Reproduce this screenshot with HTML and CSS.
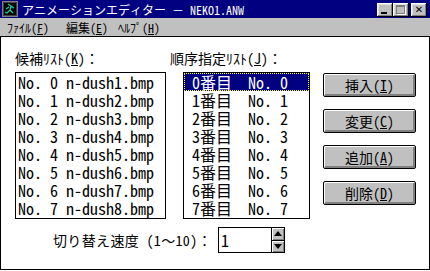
FILE: index.html
```html
<!DOCTYPE html>
<html lang="ja">
<head>
  <meta charset="UTF-8">
  <title>アニメーションエディター － NEKO1.ANW</title>
  <link rel="stylesheet" href="styles.css">
</head>
<body>

  <div class="window">
    <!-- Title bar -->
    <div class="titlebar">
      <svg class="app-icon" width="16" height="16" viewBox="0 0 16 16">
        <rect x="0.5" y="0.5" width="15" height="15" fill="#000" stroke="#808080"/>
        <rect x="1.5" y="1.5" width="13" height="13" fill="none" stroke="#404040"/>
        <path d="M6 3 L9 5 L8 9 L11 12 M8 9 L5 12 L3 11 M9 5 L12 7 M7 6 L4 8" stroke="#20c8a0" stroke-width="1.3" fill="none"/>
      </svg>
      <span class="title">アニメーションエディター － NEKO1.ANW</span>
      <div class="caption">
        <div class="cap-btn"><span class="min-glyph"></span></div>
        <div class="cap-btn"><span class="max-glyph"></span></div>
        <div class="cap-btn close">✕</div>
      </div>
    </div>

    <!-- Menu -->
    <div class="menubar">
      <span class="menu-item file">ﾌｧｲﾙ(<u>F</u>)</span>
      <span class="menu-item edit">編集(<u>E</u>)</span>
      <span class="menu-item">ﾍﾙﾌﾟ(<u>H</u>)</span>
    </div>

    <div class="client">
      <div class="labels">
        <span class="label files-label">候補ﾘｽﾄ(<u>K</u>)：</span>
        <span class="label">順序指定ﾘｽﾄ(<u>J</u>)：</span>
      </div>

      <div class="lists">
        <div class="listbox files">
          <div class="row">No. 0 n-dush1.bmp</div>
          <div class="row">No. 1 n-dush2.bmp</div>
          <div class="row">No. 2 n-dush3.bmp</div>
          <div class="row">No. 3 n-dush4.bmp</div>
          <div class="row">No. 4 n-dush5.bmp</div>
          <div class="row">No. 5 n-dush6.bmp</div>
          <div class="row">No. 6 n-dush7.bmp</div>
          <div class="row">No. 7 n-dush8.bmp</div>
        </div>

        <div class="listbox order">
          <div class="row selected"> 0番目  No. 0</div>
          <div class="row"> 1番目  No. 1</div>
          <div class="row"> 2番目  No. 2</div>
          <div class="row"> 3番目  No. 3</div>
          <div class="row"> 4番目  No. 4</div>
          <div class="row"> 5番目  No. 5</div>
          <div class="row"> 6番目  No. 6</div>
          <div class="row"> 7番目  No. 7</div>
        </div>

        <div class="buttons">
          <button class="btn">挿入(<u>I</u>)</button>
          <button class="btn">変更(<u>C</u>)</button>
          <button class="btn">追加(<u>A</u>)</button>
          <button class="btn">削除(<u>D</u>)</button>
        </div>
      </div>

      <!-- Speed -->
      <div class="speed">
        <span class="label speed-label">切り替え速度 (1～10)：</span>
        <div class="spin">
          <span class="spin-value">1</span>
          <div class="spin-arrows">
            <div class="arrow up"></div>
            <div class="arrow down"></div>
          </div>
        </div>
      </div>
    </div>
  </div>

</body>
</html>
```

FILE: styles.css
```css
body {
  margin: 0;
  width: 430px;
  height: 271px;
  overflow: hidden;
  background-color: #fff;
  color: #000;
  font-family: "Noto Sans Mono CJK JP", "Noto Sans CJK JP", monospace;
}

.window {
  width: 430px;
  height: 270px;
  display: flex;
  flex-direction: column;
}

/* Title bar */
.titlebar {
  height: 18px;
  background-color: #000080;
  color: #fff;
  display: flex;
  align-items: center;
  padding-left: 2px;
  font-size: 12px;
  flex-shrink: 0;
}

.app-icon {
  display: block;
}

.title {
  margin-left: 4px;
  white-space: pre;
}

.caption {
  margin-left: auto;
  margin-right: 3px;
  display: flex;
  padding-top: 2px;
}

.cap-btn {
  width: 16px;
  height: 14px;
  box-sizing: border-box;
  background-color: #c0c0c0;
  box-shadow: inset -1px -1px #000, inset 1px 1px #fff, inset -2px -2px #808080, inset 2px 2px #dfdfdf;
  position: relative;
}

.cap-btn.close {
  margin-left: 2px;
  font-family: "DejaVu Sans", sans-serif;
  font-size: 10px;
  font-weight: bold;
  line-height: 13px;
  text-align: center;
  color: #000;
}

.min-glyph {
  position: absolute;
  left: 4px;
  top: 9px;
  width: 6px;
  height: 2px;
  background-color: #000;
}

.max-glyph {
  position: absolute;
  left: 3px;
  top: 2px;
  width: 7px;
  height: 6px;
  border: 1px solid #808080;
  border-top-width: 2px;
  box-shadow: 1px 1px #fff;
}

/* Menu */
.menubar {
  height: 18px;
  background-color: #c0c0c0;
  border-bottom: 1px solid #000;
  display: flex;
  align-items: center;
  padding-left: 7px;
  font-size: 12px;
  flex-shrink: 0;
}

.menu-item.file {
  width: 59px;
}

.menu-item.edit {
  width: 52px;
}

/* Client area */
.client {
  flex: 1;
  border: 1px solid #000;
  border-top: none;
  padding: 13px 0 0 14px;
}

.labels {
  display: flex;
  height: 16px;
  line-height: 16px;
}

.label {
  font-size: 14px;
  white-space: pre;
}

.files-label {
  width: 155px;
}

.lists {
  display: flex;
  margin-top: 6px;
}

.listbox {
  box-sizing: border-box;
  height: 147px;
  border: 1px solid #000;
  font-size: 16px;
}

.listbox.files {
  width: 151px;
  padding-left: 2px;
}

.listbox.order {
  width: 127px;
  margin-left: 17px;
}

.row {
  height: 18px;
  line-height: 18px;
  white-space: pre;
}

.selected {
  background-color: #000080;
  color: #fff;
  outline: 1px dotted #ffff00;
  outline-offset: -1px;
}

.buttons {
  display: flex;
  flex-direction: column;
  gap: 12px;
  margin-left: 13px;
  padding-top: 1px;
}

.btn {
  width: 93px;
  height: 24px;
  padding: 0;
  border: 1px solid #000;
  border-radius: 2px;
  background-color: #c0c0c0;
  box-shadow: inset 1px 1px #fff, inset -2px -2px #808080;
  font-family: inherit;
  font-size: 14px;
  color: #000;
}

/* Speed */
.speed {
  display: flex;
  align-items: center;
  margin-top: 8px;
  padding-left: 38px;
}

.speed-label {
  width: 165px;
  letter-spacing: 0.35px;
}

.spin {
  box-sizing: border-box;
  width: 67px;
  height: 26px;
  border: 1px solid #000;
  display: flex;
}

.spin-value {
  flex: 1;
  padding-left: 2px;
  font-size: 16px;
  line-height: 24px;
}

.spin-arrows {
  width: 12px;
  border-left: 1px solid #000;
  background-color: #c0c0c0;
  display: flex;
  flex-direction: column;
}

.arrow {
  flex: 1;
  display: flex;
  align-items: center;
  justify-content: center;
  box-shadow: inset 1px 1px #fff, inset -1px -1px #808080;
}

.arrow.up {
  border-bottom: 1px solid #000;
}

.arrow.up::before {
  content: "";
  border-left: 4px solid transparent;
  border-right: 4px solid transparent;
  border-bottom: 5px solid #000;
}

.arrow.down::before {
  content: "";
  border-left: 4px solid transparent;
  border-right: 4px solid transparent;
  border-top: 5px solid #000;
}
```
